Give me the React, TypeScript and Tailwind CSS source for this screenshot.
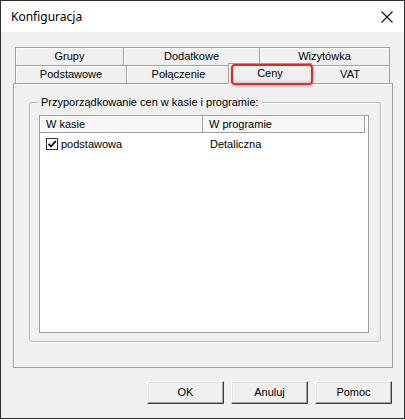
import React from "react";

const ui = { fontFamily: '"Liberation Sans", Arial, sans-serif' };

function Tab({ label, w, last }: { label: string; w: string; last?: boolean }) {
  return (
    <div
      className={`${w} h-full flex items-center justify-center border-t border-l border-[#a0a0a0] ${last ? "border-r" : ""} shadow-[inset_1px_1px_0_#fff] text-[11px] text-black`}
    >
      {label}
    </div>
  );
}

function Btn({ label }: { label: string }) {
  return (
    <div className="w-[77px] h-[23px] flex items-center justify-center bg-[#f0f0f0] border border-t-white border-l-white border-r-[#404040] border-b-[#404040] shadow-[inset_-1px_-1px_0_#a0a0a0,inset_1px_1px_0_#e3e3e3] text-[11px] text-black">
      {label}
    </div>
  );
}

export default function App() {
  return (
    <div className="w-[405px] h-[420px] bg-white" style={ui}>
      <div className="w-[405px] h-[419px] border border-[#2f2f2f] flex flex-col">
        <div className="h-[31px] bg-white flex items-center justify-between pl-[10px] pr-[10px]">
          <span className="text-[12px] text-black" style={{ fontFamily: '"Noto Sans", "Open Sans", sans-serif' }}>
            Konfiguracja
          </span>
          <svg width="12" height="12" viewBox="0 0 12 12" className="mr-[1px]">
            <path d="M0.5 0.5 L11.5 11.5 M11.5 0.5 L0.5 11.5" stroke="#111" strokeWidth="1.1" />
          </svg>
        </div>
        <div className="flex-1 bg-[#f0f0f0] flex flex-col px-[12px] pt-[15px]">
          <div className="relative ml-[2px] w-[375px]">
            <div className="flex h-[18px]">
              <Tab label="Grupy" w="w-[108px]" />
              <Tab label="Dodatkowe" w="w-[136px]" />
              <Tab label="Wizytówka" w="w-[131px]" last />
            </div>
            <div className="flex h-[18px]">
              <Tab label="Podstawowe" w="w-[111px]" />
              <Tab label="Połączenie" w="w-[104px]" />
              <div className="relative z-10 w-[84px] -ml-[2px] -mr-[2px] -mt-[2px] h-[21px] flex items-center justify-center bg-[#f0f0f0] border-t border-l border-r border-[#a0a0a0] shadow-[inset_1px_1px_0_#fff] text-[11px] text-black pb-[2px]">
                Ceny
              </div>
              <Tab label="VAT" w="w-[80px]" last />
            </div>
            <div className="absolute z-20 left-[216px] top-[17px] w-[82px] h-[21px] rounded-[4px] border-2 border-[#e5262a] shadow-[0_1px_3px_rgba(0,0,0,0.25),inset_0_-2px_3px_rgba(0,0,0,0.12)]" />
          </div>
          <div className="w-[380px] h-[285px] border border-[#a0a0a0] shadow-[inset_1px_1px_0_#fff] pl-[15px] pt-[18px]">
            <div className="relative w-[352px] h-[240px] border border-[#b4b4b4] rounded-[3px] shadow-[inset_1px_1px_0_#fff,1px_1px_0_#fff] pl-[9px] pt-[12px]">
              <div className="absolute left-[8px] -top-[8px] bg-[#f0f0f0] px-[3px] text-[11px] text-black leading-[14px]">
                Przyporządkowanie cen w kasie i programie:
              </div>
              <div className="w-[330px] h-[218px] border border-[#a0a0a0] bg-white">
                <div className="flex h-[17px] bg-[#f6f6f6]">
                  <div className="w-[163px] h-full flex items-center pl-[6px] border-r border-b border-[#a0a0a0] shadow-[inset_1px_1px_0_#fff] text-[11px] text-black">
                    W kasie
                  </div>
                  <div className="w-[162px] h-full flex items-center pl-[6px] border-r border-b border-[#a0a0a0] shadow-[inset_1px_1px_0_#fff] text-[11px] text-black">
                    W programie
                  </div>
                  <div className="flex-1 bg-white" />
                </div>
                <div className="flex h-[18px] mt-[2px] items-center">
                  <div className="w-[163px] flex items-center pl-[6px]">
                    <div className="w-[12px] h-[12px] border border-[#333] bg-white flex items-center justify-center">
                      <svg width="10" height="10" viewBox="0 0 10 10">
                        <path d="M1.5 4.8 L4 7.5 L8.8 2" stroke="#000" strokeWidth="1.8" fill="none" />
                      </svg>
                    </div>
                    <span className="ml-[3px] text-[11px] text-black">podstawowa</span>
                  </div>
                  <div className="pl-[7px] text-[11px] text-black">Detaliczna</div>
                </div>
              </div>
            </div>
          </div>
          <div className="flex justify-end gap-[7px] mt-[13px] pr-[0px]">
            <Btn label="OK" />
            <Btn label="Anuluj" />
            <Btn label="Pomoc" />
          </div>
        </div>
      </div>
    </div>
  );
}
